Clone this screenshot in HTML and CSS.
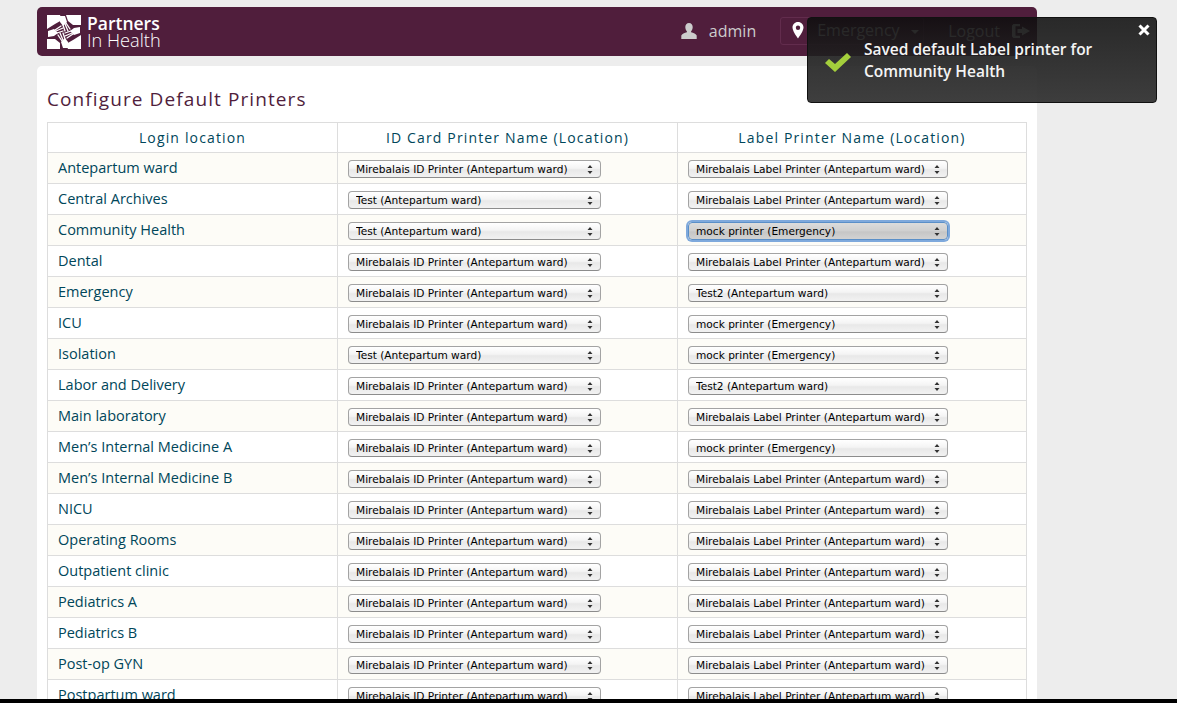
FILE: index.html
```html
<!DOCTYPE html>
<html lang="en">
<head>
    <meta charset="UTF-8">
    <title>Configure Default Printers</title>
    <link rel="stylesheet" href="styles.css">
</head>
<body>
    <header class="topbar">
        <a class="logo" href="#">
            <svg class="logo-mark" viewBox="0 0 34 34" width="34" height="34">
                <path fill="#fff" d="M0 0H13L15 5 8 9 0 14zM19 0H34V10L26 10 21 6zM34 20V34H21L19 29 26 25zM13 34H0V24L8 24 13 28z"/>
                <g id="hand" fill="#fff" stroke="#fff" stroke-width="1.300" stroke-linecap="round">
                    <path stroke="none" d="M1 16l6-2 4 4-4 3-6 1z"/>
                    <path fill="none" d="M8 15l6-4M9 16l7-3M10 18l6-2"/>
                </g>
                <g fill="#fff" stroke="#fff" stroke-width="1.300" stroke-linecap="round" transform="rotate(90 17 17)">
                    <path stroke="none" d="M1 16l6-2 4 4-4 3-6 1z"/>
                    <path fill="none" d="M8 15l6-4M9 16l7-3M10 18l6-2"/>
                </g>
                <g fill="#fff" stroke="#fff" stroke-width="1.300" stroke-linecap="round" transform="rotate(180 17 17)">
                    <path stroke="none" d="M1 16l6-2 4 4-4 3-6 1z"/>
                    <path fill="none" d="M8 15l6-4M9 16l7-3M10 18l6-2"/>
                </g>
                <g fill="#fff" stroke="#fff" stroke-width="1.300" stroke-linecap="round" transform="rotate(270 17 17)">
                    <path stroke="none" d="M1 16l6-2 4 4-4 3-6 1z"/>
                    <path fill="none" d="M8 15l6-4M9 16l7-3M10 18l6-2"/>
                </g>
            </svg>
            <span class="logo-text"><b>Partners</b><span>In Health</span></span>
        </a>
        <nav class="usernav">
            <span class="nav-user">
                <svg class="icon-user" viewBox="0 0 16 16" width="16" height="16"><path fill="#ccc" d="M8 0c2.300 0 3.700 1.700 3.700 4 0 1.800-.7 3.300-1.600 4.200v1.100c2.300.6 5.100 1.700 5.600 3.200V16H.3v-3.500c.5-1.500 3.300-2.600 5.600-3.200V8.200C5 7.300 4.300 5.800 4.300 4 4.300 1.700 5.700 0 8 0z"/></svg>
                admin
            </span>
            <span class="nav-location">
                <svg class="icon-pin" viewBox="0 0 12 17" width="12" height="17"><path fill="#fff" fill-rule="evenodd" d="M6 0C2.700 0 .5 2.500.5 5.600.5 9 4.500 14.500 6 16.500 7.500 14.500 11.500 9 11.500 5.600 11.500 2.500 9.300 0 6 0zm0 3.500a2.200 2.200 0 1 1 0 4.400 2.200 2.200 0 0 1 0-4.400z"/></svg>
                Emergency
                <i class="caret"></i>
            </span>
            <span class="nav-logout">
                Logout
                <svg class="icon-logout" viewBox="0 0 18 16" width="18" height="16"><path fill="#ccc" d="M1.500 1H8v2.200H3.500v9.600H8V15H1.500L0 13.500v-11zM10 3.500L18 8l-8 4.500V10H5.500V6H10z"/></svg>
            </span>
        </nav>
    </header>

    <main class="content">
        <h1>Configure Default Printers</h1>
        <table class="printers">
            <thead>
                <tr>
                    <th>Login location</th>
                    <th>ID Card Printer Name (Location)</th>
                    <th>Label Printer Name (Location)</th>
                </tr>
            </thead>
            <tbody id="rows"></tbody>
        </table>
    </main>

    <div class="toast">
        <svg class="toast-check" viewBox="0 0 26 19" width="26" height="19"><path fill="#a4cf3c" d="M0 10l4-4 6 5L22 0l4 4-16 15z"/></svg>
        <p>Saved default Label printer for Community Health</p>
        <svg class="toast-close" viewBox="0 0 12 12" width="12" height="12"><path fill="none" stroke="#fff" stroke-width="3" d="M1.500 1.500l9 9M10.500 1.500l-9 9"/></svg>
    </div>

    <div class="window-edge"></div>

    <script src="app.js"></script>
</body>
</html>
```

FILE: styles.css
```css
html, body {
    height: 100%;
    overflow: hidden;
}
body {
    margin: 0;
    padding: 7px 140px 0 37px;
    background: #ededed;
    font-family: "Open Sans", sans-serif;
    box-sizing: border-box;
}
.topbar {
    display: flex;
    align-items: center;
    justify-content: space-between;
    height: 49px;
    padding: 0 7px 0 10px;
    background: #501e3c;
    border-radius: 5px;
    color: #ccc;
    font-size: 16px;
}
.logo {
    display: flex;
    align-items: center;
    gap: 6px;
    color: #fff;
    text-decoration: none;
}
.logo-text {
    display: flex;
    flex-direction: column;
    line-height: 17px;
}
.logo-text b {
    font-size: 17.5px;
    font-weight: 600;
}
.logo-text span {
    font-size: 18.200px;
    font-weight: 300;
}
.usernav {
    display: flex;
    align-items: center;
}
.nav-user {
    display: flex;
    align-items: center;
    gap: 12px;
    margin: 0 24px 2px 0;
}
.nav-location {
    display: flex;
    align-items: center;
    width: 144px;
    height: 28px;
    padding: 0 0 2px 11px;
    margin: 0 24px 1px 0;
    box-sizing: border-box;
    border: 1px solid #622c4d;
    border-radius: 3px;
}
.icon-pin {
    margin-right: 13px;
}
.caret {
    width: 0;
    height: 0;
    margin: 3px 0 0 11px;
    border: 4px solid transparent;
    border-top-color: #ccc;
    border-bottom: 0;
}
.nav-logout {
    display: flex;
    align-items: center;
    gap: 12px;
    margin-bottom: 2px;
}
.content {
    margin-top: 10px;
    padding: 20px 10px;
    background: #fff;
    border-radius: 5px;
}
h1 {
    margin: 0 0 10px;
    color: #501e3c;
    font-size: 19px;
    font-weight: 400;
    line-height: 26px;
    letter-spacing: 1.1px;
}
.printers {
    width: 980px;
    table-layout: fixed;
    border-collapse: collapse;
}
.printers th,
.printers td {
    height: 30px;
    padding: 0 10px;
    border: 1px solid #ddd;
    box-sizing: border-box;
}
.printers th {
    color: #00465a;
    font-size: 14px;
    font-weight: 400;
    letter-spacing: 1.150px;
    text-align: center;
}
.printers th:nth-child(1) { width: 290px; }
.printers th:nth-child(2) { width: 340px; }
.printers td {
    height: 31px;
    color: #00465a;
    font-size: 14.500px;
}
.printers td:first-child {
    padding-bottom: 2px;
}
.printers tbody tr:nth-child(odd) {
    background: #fdfcf7;
}
.printers select {
    display: block;
    appearance: none;
    height: 18px;
    margin-top: 2px;
    padding: 0 18px 0 7px;
    border: 1px solid #a3a3a3;
    border-bottom-color: #8c8c8c;
    border-radius: 4px;
    background: url("data:image/svg+xml,%3Csvg xmlns='http://www.w3.org/2000/svg' width='6' height='9'%3E%3Cpath fill='%23333' d='M3 0l2.500 3h-5zM3 9L.5 6h5z'/%3E%3C/svg%3E") no-repeat right 7px center,
        linear-gradient(#fff, #f4f4f4 45%, #e8e8e8 55%, #f2f2f2);
    color: #000;
    font-family: "DejaVu Sans", sans-serif;
    font-size: 10.600px;
}
.printers select.id-printer { width: 253px; }
.printers select.label-printer { width: 260px; }
.printers select.focused {
    border-color: #5a8fc8;
    outline: 0;
    box-shadow: 0 0 0 2px #7fa9dc;
    background: url("data:image/svg+xml,%3Csvg xmlns='http://www.w3.org/2000/svg' width='6' height='9'%3E%3Cpath fill='%23333' d='M3 0l2.500 3h-5zM3 9L.5 6h5z'/%3E%3C/svg%3E") no-repeat right 7px center,
        linear-gradient(#dcdcdc, #cfcfcf 50%, #c6c6c6 55%, #d2d2d2);
}
.toast {
    position: absolute;
    top: 17px;
    left: 807px;
    display: flex;
    width: 350px;
    height: 86px;
    box-sizing: border-box;
    padding: 20px 40px 0 56px;
    border: 1px solid #111;
    border-radius: 4px;
    background: linear-gradient(rgba(14, 14, 14, 0.88), rgba(50, 50, 50, 0.94));
    color: #fff;
}
.toast p {
    margin: 0;
    font-size: 15.500px;
    font-weight: 600;
    line-height: 22px;
    color: #f4f4f4;
}
.toast-check {
    position: absolute;
    top: 35px;
    left: 17px;
}
.toast-close {
    position: absolute;
    top: 6px;
    right: 6px;
}
.window-edge {
    position: fixed;
    left: 0;
    right: 0;
    bottom: 0;
    height: 4px;
    background: #000;
}
```

FILE: app.js
```js
const ID_MIRE = 'Mirebalais ID Printer (Antepartum ward)';
const ID_TEST = 'Test (Antepartum ward)';
const LABEL_MIRE = 'Mirebalais Label Printer (Antepartum ward)';
const LABEL_MOCK = 'mock printer (Emergency)';
const LABEL_TEST2 = 'Test2 (Antepartum ward)';

const rowsData = [
    ['Antepartum ward', ID_MIRE, LABEL_MIRE],
    ['Central Archives', ID_TEST, LABEL_MIRE],
    ['Community Health', ID_TEST, LABEL_MOCK],
    ['Dental', ID_MIRE, LABEL_MIRE],
    ['Emergency', ID_MIRE, LABEL_TEST2],
    ['ICU', ID_MIRE, LABEL_MOCK],
    ['Isolation', ID_TEST, LABEL_MOCK],
    ['Labor and Delivery', ID_MIRE, LABEL_TEST2],
    ['Main laboratory', ID_MIRE, LABEL_MIRE],
    ['Men\u2019s Internal Medicine A', ID_MIRE, LABEL_MOCK],
    ['Men\u2019s Internal Medicine B', ID_MIRE, LABEL_MIRE],
    ['NICU', ID_MIRE, LABEL_MIRE],
    ['Operating Rooms', ID_MIRE, LABEL_MIRE],
    ['Outpatient clinic', ID_MIRE, LABEL_MIRE],
    ['Pediatrics A', ID_MIRE, LABEL_MIRE],
    ['Pediatrics B', ID_MIRE, LABEL_MIRE],
    ['Post-op GYN', ID_MIRE, LABEL_MIRE],
    ['Postpartum ward', ID_MIRE, LABEL_MIRE],
];

function createSelect(className, options, value) {
    const select = document.createElement('select');
    select.className = className;
    options.forEach((text) => {
        const option = document.createElement('option');
        option.textContent = text;
        select.appendChild(option);
    });
    select.value = value;
    return select;
}

const tbody = document.getElementById('rows');
rowsData.forEach(([location, idPrinter, labelPrinter]) => {
    const tr = document.createElement('tr');
    const name = document.createElement('td');
    name.textContent = location;
    const idCell = document.createElement('td');
    idCell.appendChild(createSelect('id-printer', [ID_MIRE, ID_TEST], idPrinter));
    const labelCell = document.createElement('td');
    const labelSelect = createSelect('label-printer', [LABEL_MIRE, LABEL_MOCK, LABEL_TEST2], labelPrinter);
    if (location === 'Community Health') {
        labelSelect.classList.add('focused');
    }
    labelCell.appendChild(labelSelect);
    tr.append(name, idCell, labelCell);
    tbody.appendChild(tr);
});
```
